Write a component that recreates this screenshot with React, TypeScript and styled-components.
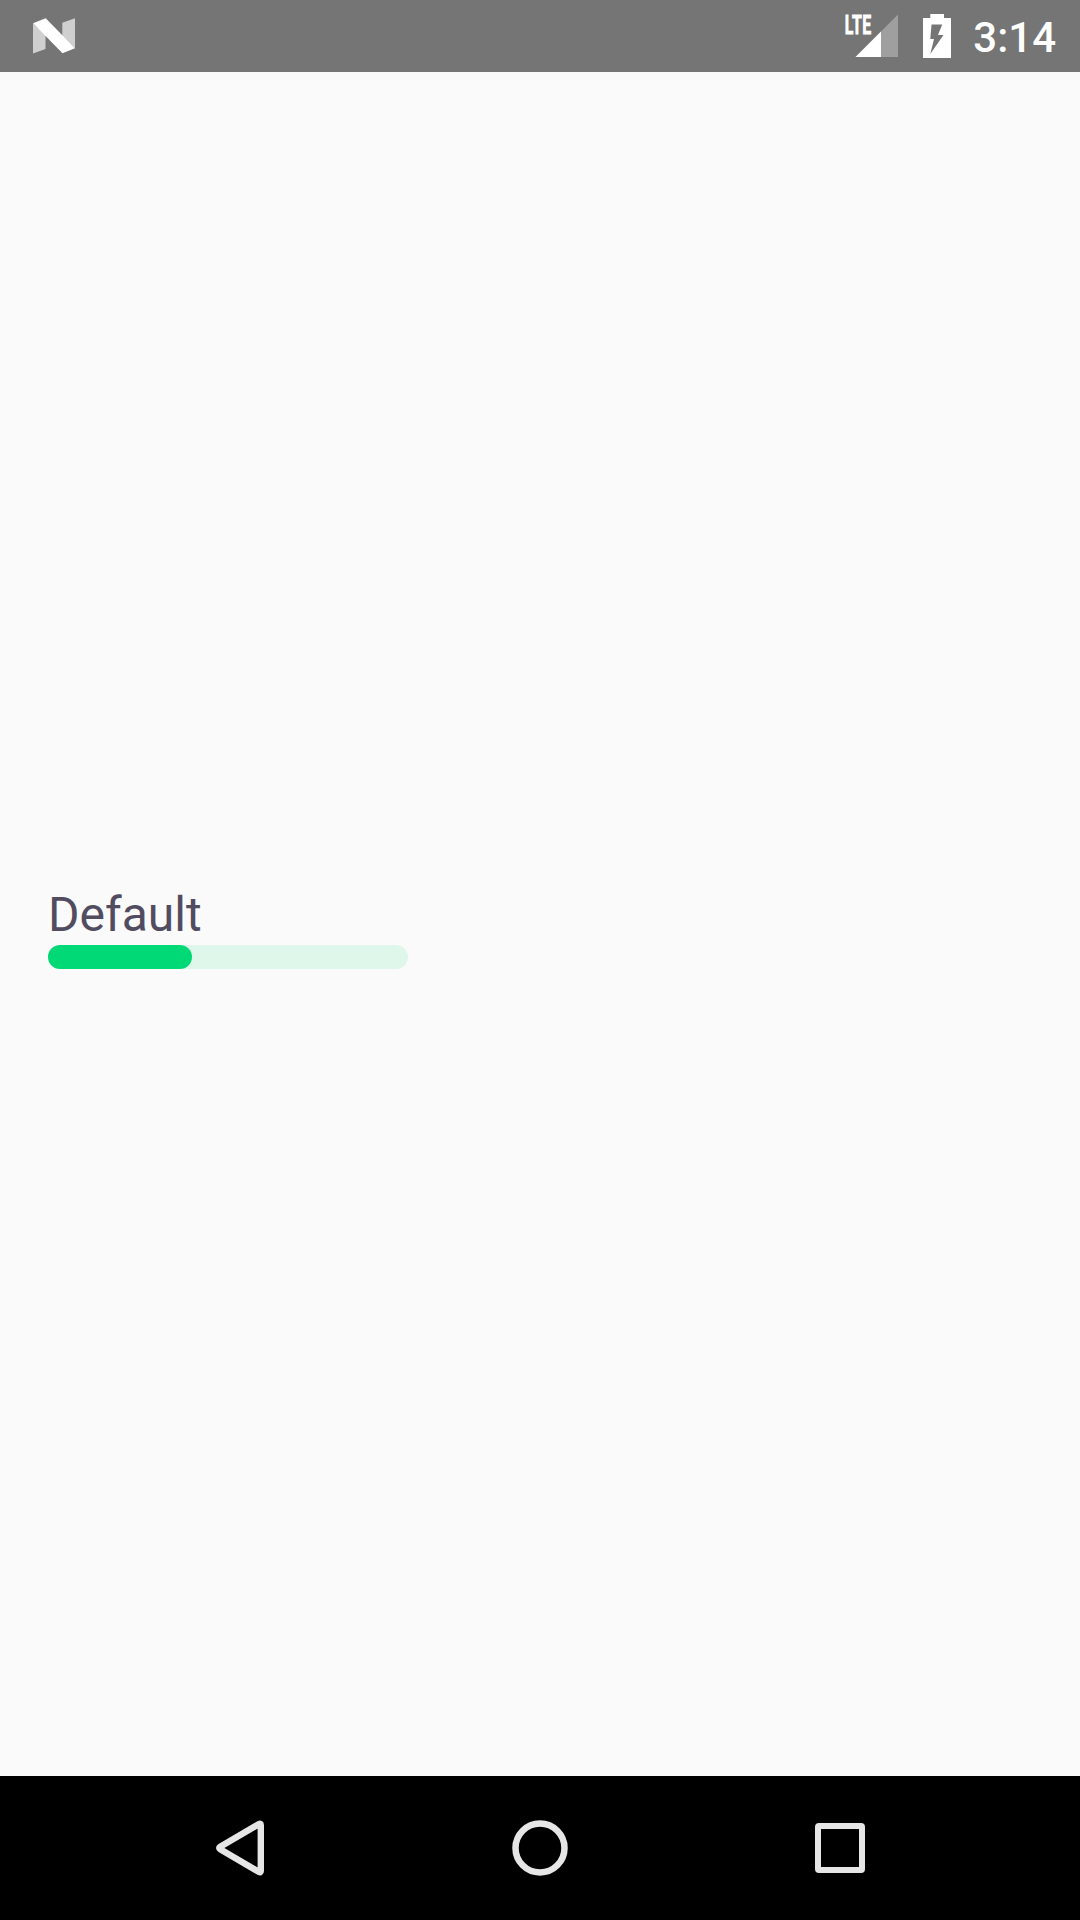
import React from "react";
import styled, { createGlobalStyle } from "styled-components";

const GlobalStyle = createGlobalStyle`
  *, *::before, *::after { box-sizing: border-box; }
  body { margin: 0; background: #fafafa; }
`;

const Screen = styled.div`
  width: 1080px;
  height: 1920px;
  display: flex;
  flex-direction: column;
  background: #fafafa;
  font-family: Roboto, "Noto Sans", sans-serif;
  overflow: hidden;
`;

const StatusBar = styled.header`
  flex: none;
  height: 72px;
  padding: 0 24px 0 32px;
  display: flex;
  align-items: center;
  justify-content: space-between;
  background: #757575;
`;

const StatusIcons = styled.div`
  display: flex;
  align-items: center;
`;

const Icon = styled.svg<{ $gap?: number }>`
  display: block;
  flex: none;
  overflow: visible;
  margin-right: ${(p) => p.$gap ?? 0}px;
`;

const NetworkLabel = styled.text`
  font-family: Roboto, sans-serif;
  font-size: 25px;
  font-weight: 700;
  letter-spacing: 0.8px;
  fill: #fff;
  stroke: #fff;
  stroke-width: 0.8px;
`;

const Clock = styled.time`
  padding-top: 4px;
  font-size: 42px;
  line-height: 50px;
  font-weight: 500;
  color: #fff;
`;

const Content = styled.main`
  flex: 1;
  display: flex;
  flex-direction: column;
  justify-content: center;
  padding: 6px 48px 0;
`;

const Label = styled.span`
  font-size: 48px;
  line-height: 60px;
  color: #524c61;
`;

const Track = styled.div`
  width: 360px;
  height: 24px;
  border-radius: 12px;
  background: #dff6eb;
`;

const Fill = styled.div<{ $percent: number }>`
  width: ${(p) => p.$percent}%;
  height: 100%;
  border-radius: 12px;
  background: #00d975;
`;

const NavBar = styled.nav`
  flex: none;
  height: 144px;
  padding: 0 90px;
  display: grid;
  grid-template-columns: repeat(3, 300px);
  background: #000;
`;

const NavButton = styled.button`
  display: flex;
  align-items: center;
  justify-content: center;
  padding: 0;
  border: 0;
  background: none;
`;

const AndroidLogo = () => (
  <Icon width="44" height="36" viewBox="32 18 44 36">
    <path d="M33 23.5L45.5 35V49L33 53.5Z" fill="#cfcfcf" />
    <path d="M62.3 22.8L75 18.3V48.3L62.3 36Z" fill="#cfcfcf" />
    <path d="M33 23.3L45.7 18.3L75 48.3L62.5 53.3Z" fill="#fff" />
  </Icon>
);

const Signal = () => (
  <Icon width="54" height="44" viewBox="845 14 54 44" $gap={24}>
    <path d="M855.5 57L898 14.5V57Z" fill="#9f9f9f" />
    <path d="M855.5 57L881 31.5V57Z" fill="#fff" />
    <NetworkLabel transform="translate(844.7 33.5) scale(.635 1)" x="0" y="0">LTE</NetworkLabel>
  </Icon>
);

const Battery = () => (
  <Icon width="28" height="44" viewBox="923 14 28 44" $gap={22}>
    <path
      fill="#fff"
      fillRule="evenodd"
      d="M930.3 14H944V18H951V58H923V18H930.3ZM931.5 24.5L930.3 39H934L930.3 54L943.5 35H938L942.2 24.5Z"
    />
  </Icon>
);

export default function App() {
  return (
    <Screen>
      <GlobalStyle />
      <StatusBar>
        <AndroidLogo />
        <StatusIcons>
          <Signal />
          <Battery />
          <Clock>3:14</Clock>
        </StatusIcons>
      </StatusBar>
      <Content>
        <Label>Default</Label>
        <Track role="progressbar" aria-valuenow={40}>
          <Fill $percent={40} />
        </Track>
      </Content>
      <NavBar>
        <NavButton aria-label="Back">
          <Icon width="60" height="60" viewBox="0 0 60 60" fill="none" stroke="#e6e6e6" strokeWidth="6.4">
            <path d="M10.2 28.8Q8.2 30 10.2 31.2L49 54Q50.8 55 50.8 53V7Q50.8 5 49 6Z" strokeLinejoin="round" />
          </Icon>
        </NavButton>
        <NavButton aria-label="Home">
          <Icon width="60" height="60" viewBox="0 0 60 60" fill="none" stroke="#e6e6e6" strokeWidth="6.5">
            <circle cx="30" cy="30" r="24.5" />
          </Icon>
        </NavButton>
        <NavButton aria-label="Recents">
          <Icon width="60" height="60" viewBox="0 0 60 60">
            <path
              d="M9 5H51Q55 5 55 9V51Q55 55 51 55H9Q5 55 5 51V9Q5 5 9 5ZM11 11V49H49V11Z"
              fill="#e6e6e6"
              fillRule="evenodd"
            />
          </Icon>
        </NavButton>
      </NavBar>
    </Screen>
  );
}
